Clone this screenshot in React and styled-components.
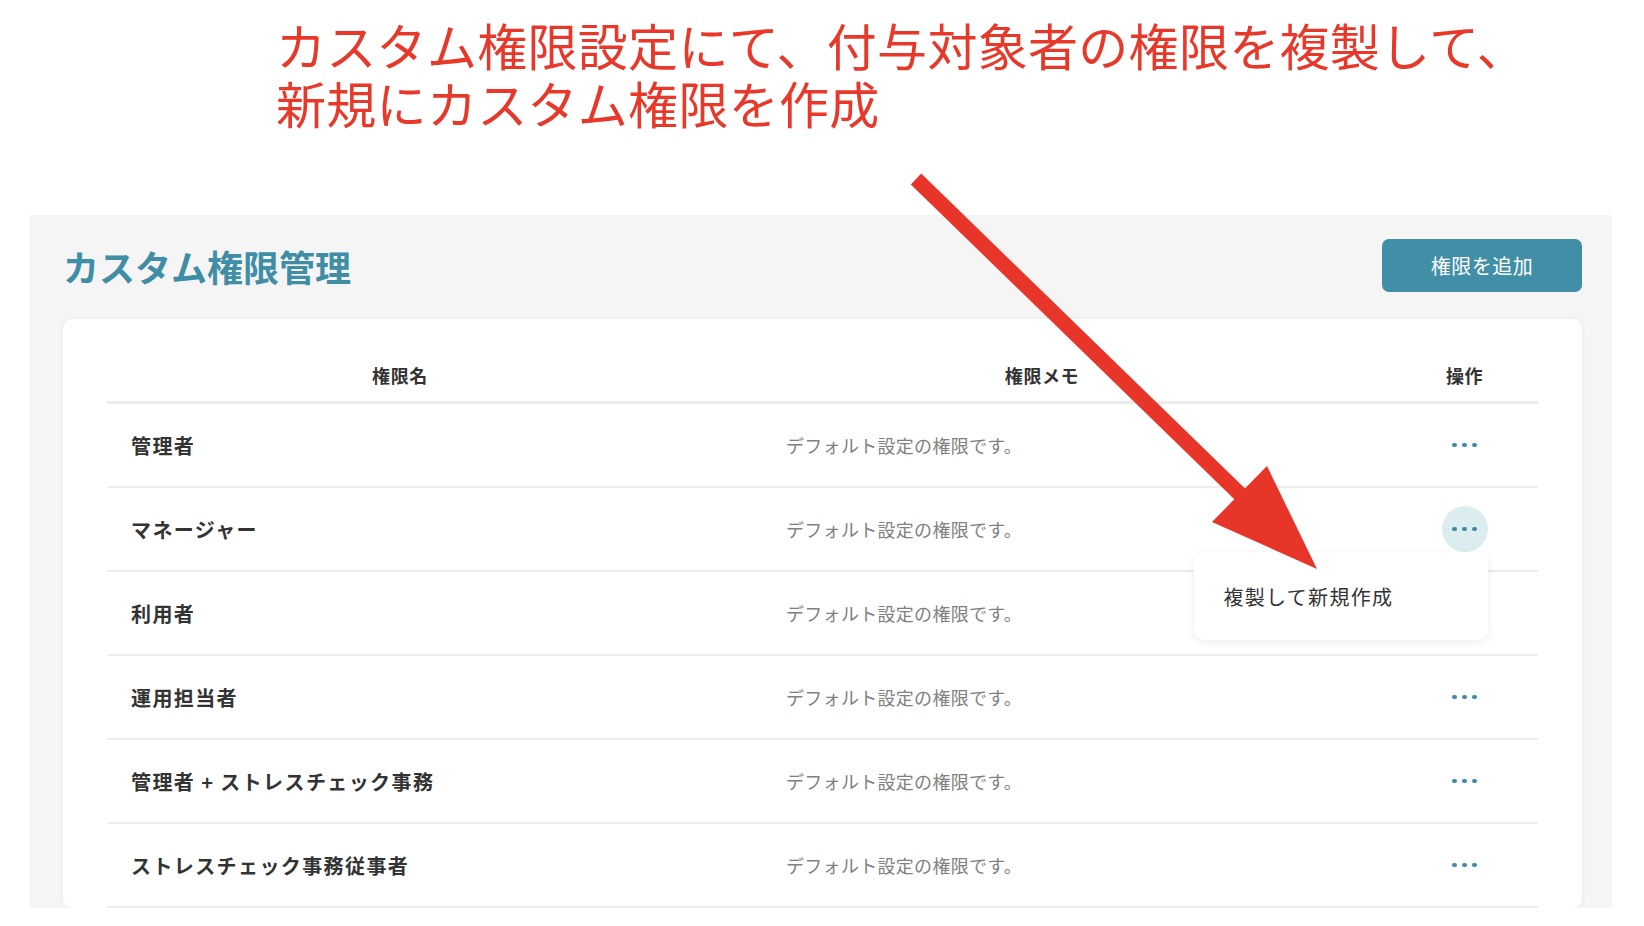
import React from "react";
import styled, { createGlobalStyle } from "styled-components";

const GlobalStyle = createGlobalStyle`
  html, body {
    margin: 0;
    padding: 0;
    background: #ffffff;
  }
  body {
    font-family: "Noto Sans CJK JP", "Noto Sans", "Liberation Sans", sans-serif;
    color: #333333;
  }
  * { box-sizing: border-box; }
`;

const Page = styled.div`
  position: relative;
  width: 1644px;
  height: 926px;
  overflow: hidden;
  background: #ffffff;
`;

const Annotation = styled.div`
  height: 215px;
  padding: 15px 0 0 276px;
  color: #e8382a;
  font-size: 50px;
  font-weight: 400;
  line-height: 58px;
  letter-spacing: 0.3px;
`;

const AnnotationLine = styled.div`
  white-space: nowrap;
`;

const ArrowLayer = styled.svg`
  position: absolute;
  left: 0;
  top: 0;
  width: 1644px;
  height: 926px;
  pointer-events: none;
  z-index: 10;
`;

const Panel = styled.section`
  margin-left: 30px;
  width: 1582px;
  height: 693px;
  background: #f5f5f5;
  overflow: hidden;
  padding: 24px 30px 0 33px;
  display: flex;
  flex-direction: column;
`;

const PanelHeader = styled.header`
  display: flex;
  align-items: center;
  justify-content: space-between;
  height: 53px;
`;

const Title = styled.h1`
  margin: 0;
  font-size: 36px;
  font-weight: 700;
  color: #3f8ea6;
  letter-spacing: 0px;
  line-height: 1;
`;

const AddButton = styled.button`
  width: 200px;
  height: 53px;
  border: none;
  border-radius: 7px;
  background: #418ea7;
  color: #ffffff;
  font-family: inherit;
  font-size: 20px;
  font-weight: 400;
  letter-spacing: 0.5px;
`;

const Card = styled.div`
  margin-top: 27px;
  flex: 1;
  background: #ffffff;
  border-radius: 10px;
  box-shadow: 0 0 6px rgba(0, 0, 0, 0.05);
  padding: 32px 44px 0 44px;
`;

const Grid = styled.div`
  display: grid;
  grid-template-columns: 586px 698px 147px;
  align-items: center;
`;

const HeadRow = styled(Grid)`
  height: 53px;
  padding-bottom: 3px;
  border-bottom: 3px solid #ebebeb;
`;

const HeadCell = styled.div`
  text-align: center;
  font-size: 18px;
  font-weight: 700;
  color: #333333;
  letter-spacing: 0.6px;
`;

const BodyRow = styled(Grid)`
  height: 84px;
  border-bottom: 2px solid #ededed;
`;

const NameCell = styled.div`
  padding-left: 24px;
  font-size: 20px;
  font-weight: 700;
  letter-spacing: 1.4px;
  color: #333333;
  white-space: nowrap;
`;

const MemoCell = styled.div`
  padding-left: 93px;
  font-size: 18px;
  font-weight: 400;
  letter-spacing: 0.3px;
  color: #808080;
  white-space: nowrap;
`;

const ActionCell = styled.div`
  display: flex;
  justify-content: center;
`;

const ActionWrap = styled.div`
  position: relative;
`;

const DotsButton = styled.button`
  width: 46px;
  height: 46px;
  border: none;
  padding: 0;
  border-radius: 50%;
  background: ${(p) => (p.$active ? "#dcedf0" : "transparent")};
  display: flex;
  align-items: center;
  justify-content: center;
  gap: 5.5px;
`;

const Dot = styled.span`
  width: 4.5px;
  height: 4.5px;
  border-radius: 50%;
  background: #3b8ca4;
`;

const Menu = styled.div`
  position: absolute;
  top: 100%;
  right: 0;
  width: 294px;
  height: 88px;
  background: #ffffff;
  border-radius: 10px;
  box-shadow: 0 2px 8px rgba(0, 0, 0, 0.08);
  display: flex;
  align-items: center;
  padding-left: 30px;
  font-size: 20px;
  letter-spacing: 1.3px;
  color: #333333;
  white-space: nowrap;
  z-index: 5;
`;

const rows = [
  { name: "管理者" },
  { name: "マネージャー", open: true },
  { name: "利用者" },
  { name: "運用担当者" },
  { name: "管理者 + ストレスチェック事務" },
  { name: "ストレスチェック事務従事者" },
];

function Dots({ active }) {
  return (
    <DotsButton $active={active}>
      <Dot />
      <Dot />
      <Dot />
    </DotsButton>
  );
}

export default function App() {
  return (
    <>
      <GlobalStyle />
      <Page>
        <Annotation>
          <AnnotationLine>カスタム権限設定にて、付与対象者の権限を複製して、</AnnotationLine>
          <AnnotationLine>新規にカスタム権限を作成</AnnotationLine>
        </Annotation>
        <Panel>
          <PanelHeader>
            <Title>カスタム権限管理</Title>
            <AddButton>権限を追加</AddButton>
          </PanelHeader>
          <Card>
            <HeadRow>
              <HeadCell>権限名</HeadCell>
              <HeadCell>権限メモ</HeadCell>
              <HeadCell>操作</HeadCell>
            </HeadRow>
            {rows.map((r) => (
              <BodyRow key={r.name}>
                <NameCell>{r.name}</NameCell>
                <MemoCell>デフォルト設定の権限です。</MemoCell>
                <ActionCell>
                  <ActionWrap>
                    <Dots active={r.open} />
                    {r.open && <Menu>複製して新規作成</Menu>}
                  </ActionWrap>
                </ActionCell>
              </BodyRow>
            ))}
          </Card>
        </Panel>
        <ArrowLayer viewBox="0 0 1644 926">
          <line
            x1="916"
            y1="179"
            x2="1246"
            y2="500"
            stroke="#e8352a"
            strokeWidth="15"
            strokeLinecap="butt"
          />
          <polygon points="1267,466 1212,522 1317,569" fill="#e8352a" />
        </ArrowLayer>
      </Page>
    </>
  );
}
